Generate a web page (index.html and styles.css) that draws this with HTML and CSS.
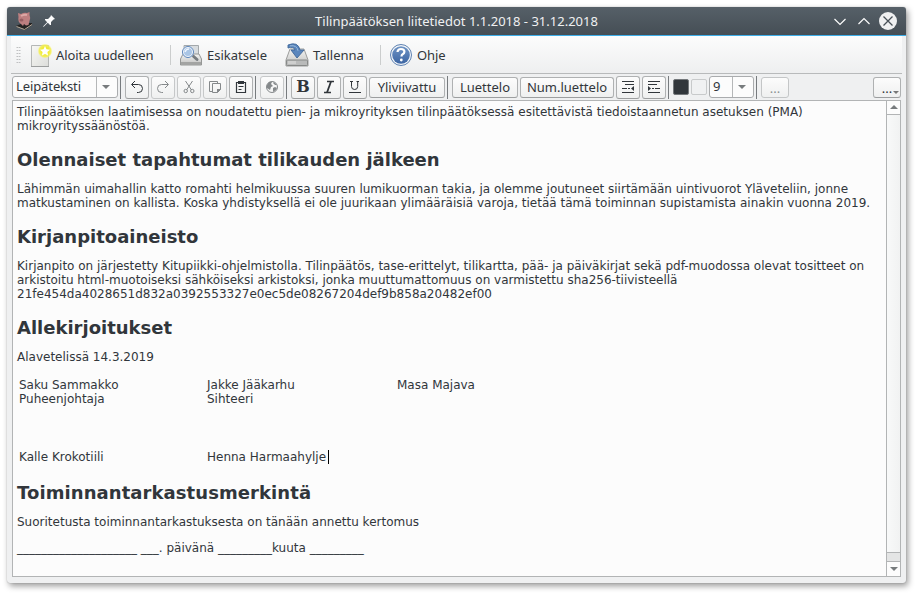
FILE: index.html
```html
<!DOCTYPE html>
<html lang="fi">
<head>
<meta charset="utf-8">
<title>Tilinpäätöksen liitetiedot</title>
<link rel="stylesheet" href="styles.css">
</head>
<body>
<div class="window">
  <header class="titlebar">
    <svg class="pig" width="20" height="20" viewBox="0 0 20 20"><path d="M1 15l7-3 9 0 0 2-7 5z" fill="#242323"/><path d="M1.500 15.500l8 3 7.500-5" fill="none" stroke="#b7a896" stroke-width="1"/><path d="M3 2l3 1q3-2 6-1l2.500-1 0 3q1.500 3 0 6l-1 4-2.500.5L9 13l-1 2-2-2Q2.500 11 3.500 6z" fill="#bd7f80"/><path d="M6 5q3-2 6-1" stroke="#dda9a6" stroke-width="2" fill="none"/><ellipse cx="6.500" cy="9" rx="2" ry="1.500" fill="#985e62"/></svg>
    <svg class="pin" width="12" height="12" viewBox="0 0 12 12"><path d="M8 0l4 4-1.500.5L8 7l0 3-1 0-2.200-2.200L1 11.500 0 12l.5-1L4.200 7.200 2 5l0-1 3 0 2.500-2.500z" fill="#fcfcfc"/></svg>
    <h1 class="title">Tilinpäätöksen liitetiedot 1.1.2018 - 31.12.2018</h1>
    <svg class="controls" width="68" height="20" viewBox="0 0 68 20" fill="none" stroke="#fcfcfc" stroke-width="1.200"><path d="M4.500 8l5.500 5.500L15.500 8M28.500 13L34 7.500l5.500 5.500"/><circle cx="58" cy="10" r="9" fill="#eff0f1" stroke="none"/><path d="M53.500 5.500l9 9m0-9l-9 9" stroke="#475057" stroke-width="1.300"/></svg>
  </header>
  <nav class="toolbar">
    <span class="grip"></span>
    <div class="action new">
      <svg width="24" height="26" viewBox="0 0 24 26"><defs><linearGradient id="paper" x2="1" y2="1"><stop stop-color="#f8f8f4"/><stop offset="1" stop-color="#dcdddb"/></linearGradient><radialGradient id="glow"><stop offset=".5" stop-color="#f1ec35"/><stop offset=".8" stop-color="#f4ef55" stop-opacity=".85"/><stop offset="1" stop-color="#fff98a" stop-opacity="0"/></radialGradient></defs><path d="M2.500 3.500h17v21h-17z" fill="url(#paper)" stroke="#b5b7b6"/><path d="M2 24.500h18" stroke="#9c9e9e"/><circle cx="16" cy="9" r="7.500" fill="url(#glow)"/><path d="M16 4l1.500 3.300 3.500.4-2.600 2.400.7 3.500-3.100-1.700-3.100 1.700.7-3.500L11 7.700l3.500-.4z" fill="#fff"/></svg>
      <span>Aloita uudelleen</span>
    </div>
    <span class="divider"></span>
    <div class="action preview">
      <svg width="24" height="24" viewBox="0 0 24 24"><defs><linearGradient id="metal" x2="0" y2="1"><stop stop-color="#f3f3f2"/><stop offset="1" stop-color="#bfc0bf"/></linearGradient></defs><path d="M5 2.500h14.500v10H5z" fill="#d8dcdf" stroke="#a3a8ab"/><path d="M4 11h16l2.500 5v6h-21v-6z" fill="url(#metal)" stroke="#959796"/><path d="M2 19h20v3H2z" fill="#a3a4a3"/><path d="M13 12l5 4.500" stroke="#777c80" stroke-width="3" stroke-linecap="round"/><circle cx="9" cy="9" r="5" fill="#a9c5e5" stroke="#f4f7fb" stroke-width="2"/><circle cx="9" cy="9" r="5.500" fill="none" stroke="#5882b9" stroke-width="1"/><path d="M6 9q1-3 4-3" fill="none" stroke="#edf5ff" stroke-width="1.500"/></svg>
      <span>Esikatsele</span>
    </div>
    <div class="action save">
      <svg width="24" height="24" viewBox="0 0 24 24"><path d="M5 6h14l4 11v6H1v-6z" fill="url(#metal)" stroke="#9b9c9b"/><rect x="1.500" y="17" width="21" height="5.500" rx="1" fill="#b9baba" stroke="#878988"/><path d="M4 18v3m2-3v3m2-3v3m2-3v3" stroke="#e4e4e3"/><path d="M3 2Q13-2 15 7h4l-7 8-6-8h4Q9 3 3 5z" fill="#5a86bd" stroke="#3e6799" stroke-width=".9"/><path d="M5 2.800q7-1 8 5" fill="none" stroke="#99b9dc"/></svg>
      <span>Tallenna</span>
    </div>
    <span class="divider"></span>
    <div class="action help">
      <svg width="24" height="24" viewBox="0 0 24 24"><defs><linearGradient id="blue" x2="0" y2="1"><stop stop-color="#6f94c5"/><stop offset="1" stop-color="#3c65a3"/></linearGradient></defs><circle cx="12" cy="12" r="10.500" fill="#f3f6f9" stroke="#5d81b1"/><circle cx="12" cy="12" r="8.800" fill="url(#blue)"/><path d="M8.500 9q.3-3 3.500-3 3.400 0 3.400 2.700 0 1.500-1.700 2.500-1.200.8-1.200 2.300" fill="none" stroke="#fff" stroke-width="2.200"/><circle cx="12.300" cy="17" r="1.400" fill="#fff"/></svg>
      <span>Ohje</span>
    </div>
  </nav>
  <div class="format">
    <div class="combo style"><span>Leipäteksti</span><i></i></div>
    <b class="sep"></b>
    <button class="tool"><svg viewBox="0 0 16 16"><path d="M6 2L2.500 5.500 6 9M3 5.500h6.500a4 4 0 0 1 0 8H8"/></svg></button>
    <button class="tool off"><svg viewBox="0 0 16 16"><path d="M10 2l3.500 3.500L10 9M13 5.500H6.500a4 4 0 0 0 0 8H8"/></svg></button>
    <button class="tool off"><svg viewBox="0 0 16 16"><path d="M4.500 2L10.500 11M11.500 2L5.500 11"/><circle cx="4.700" cy="12" r="1.700"/><circle cx="11.300" cy="12" r="1.700"/></svg></button>
    <button class="tool off"><svg viewBox="0 0 16 16"><path d="M5 12.500H2.500v-10h8v2M5.500 4.500h8v6l-3 3h-5z"/><path d="M10 14v-4h4z" fill="#85898b" stroke="none"/></svg></button>
    <button class="tool"><svg viewBox="0 0 16 16"><path d="M5 3.500H3.500v10h9v-10H11" stroke-width="1.200"/><path d="M5 2h6v3H5z" fill="#31363b" stroke="none"/><path d="M5.500 7.500h5M5.500 10.500h3"/></svg></button>
    <b class="sep"></b>
    <button class="tool off"><svg viewBox="0 0 16 16"><circle cx="8" cy="8" r="5.500"/><path d="M3 6l2-3h3L7 5l2 2-2 1-1 3-3-2zM9 9l2-1 2 1-1 2-3 2zM10 3l3 3h-2L9 4z" fill="#85898b" stroke="none"/></svg></button>
    <b class="sep"></b>
    <button class="tool letter">B</button>
    <button class="tool"><svg viewBox="0 0 16 16"><path d="M6 2.500h7M3 13.500h7" stroke-width="1.300"/><path d="M10 2.500L6 13.500" stroke-width="1.800"/></svg></button>
    <button class="tool"><svg viewBox="0 0 16 16"><path d="M3 2.500h3M9.500 2.500H12M4.500 2.500v5q0 3 3.200 3 3 0 3-3v-5M2 13.500h12"/></svg></button>
    <button class="text strike">Yliviivattu</button>
    <b class="sep"></b>
    <button class="text list">Luettelo</button>
    <button class="text numlist">Num.luettelo</button>
    <button class="tool"><svg viewBox="0 0 16 16"><path d="M2 2.500h12M5 5.500h9M2 9.500h5M8 9.500h2M2 13.500h12"/><path d="M11 9.500l3-2.500v5z" fill="#31363b" stroke="none"/></svg></button>
    <button class="tool"><svg viewBox="0 0 16 16"><path d="M2 2.500h12M2 5.500h9M6 9.500h2M9 9.500h5M2 13.500h12"/><path d="M5 9.500L2 7v5z" fill="#31363b" stroke="none"/></svg></button>
    <b class="sep"></b>
    <span class="swatch dark"></span>
    <span class="swatch"></span>
    <div class="combo size"><span>9</span><i></i></div>
    <b class="sep"></b>
    <button class="text dots off">...</button>
    <button class="text dots menu">...</button>
  </div>
  <main class="editor">
    <article class="doc">
      <p>Tilinpäätöksen laatimisessa on noudatettu pien- ja mikroyrityksen tilinpäätöksessä esitettävistä tiedoistaannetun asetuksen (PMA)<br>mikroyrityssäänöstöä.</p>
      <h2>Olennaiset tapahtumat tilikauden jälkeen</h2>
      <p>Lähimmän uimahallin katto romahti helmikuussa suuren lumikuorman takia, ja olemme joutuneet siirtämään uintivuorot Yläveteliin, jonne<br>matkustaminen on kallista. Koska yhdistyksellä ei ole juurikaan ylimääräisiä varoja, tietää tämä toiminnan supistamista ainakin vuonna 2019.</p>
      <h2>Kirjanpitoaineisto</h2>
      <p>Kirjanpito on järjestetty Kitupiikki-ohjelmistolla. Tilinpäätös, tase-erittelyt, tilikartta, pää- ja päiväkirjat sekä pdf-muodossa olevat tositteet on<br>arkistoitu html-muotoiseksi sähköiseksi arkistoksi, jonka muuttumattomuus on varmistettu sha256-tiivisteellä<br>21fe454da4028651d832a0392553327e0ec5de08267204def9b858a20482ef00</p>
      <h2>Allekirjoitukset</h2>
      <p>Alavetelissä 14.3.2019</p>
      <div class="signatures">
        <div>Saku Sammakko<br>Puheenjohtaja</div><div>Jakke Jääkarhu<br>Sihteeri</div><div>Masa Majava</div>
        <div>Kalle Krokotiili</div><div>Henna Harmaahylje<span class="caret"></span></div>
      </div>
      <h2 class="audit">Toiminnantarkastusmerkintä</h2>
      <p>Suoritetusta toiminnantarkastuksesta on tänään annettu kertomus</p>
      <p class="date">____________________ ___. päivänä _________kuuta _________</p>
    </article>
    <div class="scroll"><span class="arrow up"></span><span class="track"></span><span class="groove"></span><span class="arrow down"></span></div>
  </main>
</div>
</body>
</html>
```
FILE: styles.css
```css
* { box-sizing: border-box; }
body { margin: 0; width: 919px; height: 595px; overflow: hidden; background: #fff; color: #31363b; font: 13px "Noto Sans", sans-serif; }
svg { display: block; flex: none; }
.window { width: 899px; height: 576px; margin: 7px 0 0 7px; background: #eff0f1; border-radius: 3px; overflow: hidden; box-shadow: 0 0 1px rgba(0,0,0,.35), 2px 3px 6px rgba(0,0,0,.4); }
.titlebar { display: flex; align-items: center; height: 29px; padding: 0 8px; background: linear-gradient(#566068, #454e55); border-bottom: 1px solid #3daee9; color: #eff0f1; }
.pin { margin-left: 8px; }
.title { flex: 1; margin: 0; font-size: 13px; line-height: 28px; font-weight: 400; text-align: center; padding-left: 28px; white-space: pre; }
.toolbar { display: flex; align-items: center; height: 38px; margin: 0 4px; padding-left: 5px; background: linear-gradient(#fcfcfc, #eeeff0); border-bottom: 1px solid #b8babb; }
.grip { width: 5px; height: 18px; background: radial-gradient(circle, #b2b4b5 .7px, transparent .9px) 0 0 / 2.500px 3px; }
.action { display: flex; align-items: center; gap: 4px; white-space: nowrap; }
.new { width: 141px; margin-left: 8px; gap: 3px; letter-spacing: -.1px; margin-right: 0; }
.new svg { margin-left: 0; }
.divider { width: 1px; height: 20px; background: #cbcdcd; }
.preview { margin-left: 8px; width: 106px; }
.save { width: 95px; }
.help { margin-left: 8px; letter-spacing: -.1px; }
.format { display: flex; align-items: center; height: 26px; margin: 0 5px; gap: 2px; }
.tool, .text { flex: none; display: flex; align-items: center; justify-content: center; margin: 0; padding: 0; border: 1px solid #afb1b2; border-bottom-color: #9c9e9f; border-radius: 3px; background: linear-gradient(#fcfcfc, #eff0f0); color: #31363b; font: 13px "Noto Sans", sans-serif; }
.tool { width: 24px; height: 23px; }
.tool svg { width: 16px; height: 16px; fill: none; stroke: #31363b; stroke-width: 1; }
.tool.off { border-color: #c6c8c9; }
.tool.off svg { stroke: #85898b; }
.text { height: 21px; }
.letter { font: 700 16px/20px "DejaVu Serif", serif; }
.strike { width: 76px; }
.list { width: 66px; }
.numlist { width: 94px; }
.sep { flex: none; width: 1px; height: 23px; margin: 0 1px 0 0; background: #777b7e; }
.sep + .tool, .sep + .text { margin-left: 1px; }
.swatch { flex: none; width: 16px; height: 16px; border-radius: 2px; border: 1px solid #c8cacb; background: #f0f1f2; }
.swatch.dark { margin-left: 1px; border-color: #73777a; background: #31363b; }
.combo { flex: none; display: flex; height: 22px; border: 1px solid #aaacae; border-radius: 3px; background: #fcfcfc; line-height: 19px; }
.combo span { flex: 1; padding-left: 3px; border-right: 1px solid #b5b7b8; letter-spacing: -.1px; }
.combo i { position: relative; width: 20px; }
.style { width: 106px; }
.size { width: 45px; }
.combo i::after { content: ""; position: absolute; left: 5px; top: 8px; border: 4px solid transparent; border-top-color: #777b7d; border-bottom: 0; }
.dots { width: 28px; padding-top: 2px; }
.dots.off { color: #8c9092; border-color: #c4c6c7; }
.menu { position: relative; margin-left: auto; }
.menu::after { content: ""; position: absolute; right: 1px; bottom: 3px; border: 3px solid transparent; border-top-color: #777; border-bottom: 0; }
.editor { display: flex; width: 889px; height: 477px; margin-left: 5px; border: 1px solid #b2b4b5; background: #fcfcfc; }
.doc { flex: 1; min-width: 0; padding: 4px 0 0 4px; font: 12px/14px "DejaVu Sans", sans-serif; white-space: nowrap; }
.doc p { margin: 0; }
.doc h2 { margin: 16px 0 12px; font-size: 18px; line-height: 21px; font-weight: 700; }
.doc .audit { letter-spacing: .08px; }
.signatures { display: grid; grid-template-columns: 188px 190px 1fr; grid-template-rows: 72px 14px; margin: 14px 0 18px 2px; }
.caret { display: inline-block; width: 1px; height: 14px; margin-left: 2px; background: #000; vertical-align: top; }
.doc .date { margin-top: 12px; }
.scroll { display: flex; flex-direction: column; width: 14px; border-left: 1px solid #b2b4b5; }
.arrow { position: relative; height: 14px; }
.up { border-bottom: 1px solid #b2b4b5; }
.arrow::after { content: ""; position: absolute; left: 2.500px; top: 5px; border: 4px solid transparent; border-top-color: #777b7d; border-bottom: 0; }
.up::after { border-top: 0; border-bottom: 4px solid #777b7d; top: 4px; }
.track { flex: 1; background: linear-gradient(90deg, #f8f9f9, #f1f2f2); }
.groove { height: 10px; background: #e4e5e5; border: solid #b2b4b5; border-width: 1px 0; }
```
